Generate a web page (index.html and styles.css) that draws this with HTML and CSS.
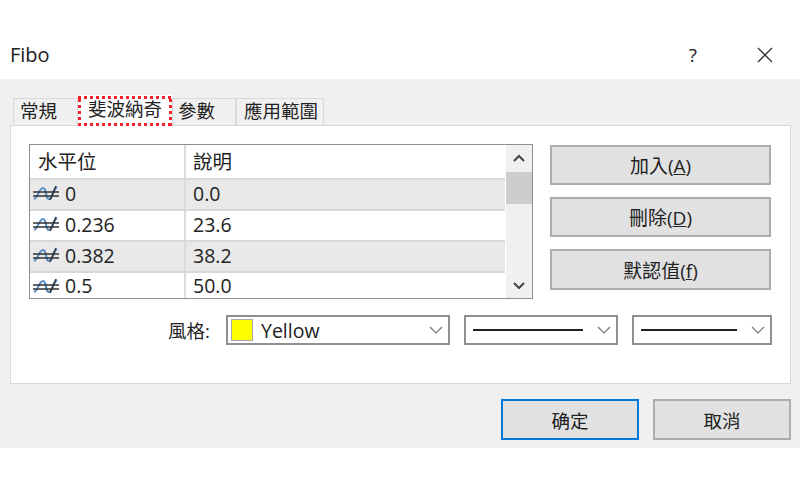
FILE: index.html
```html
<!DOCTYPE html>
<html lang="zh-Hant">
<head>
    <meta charset="UTF-8">
    <title>Fibo</title>
    <link rel="stylesheet" href="styles.css">
</head>
<body>
    <!-- Icon used in every level row -->
    <svg class="sprite" width="0" height="0">
        <symbol id="level" viewBox="0 0 26 17">
            <path d="M1 14C5 13 6 3 10 3C14 3 12 14 16 14C20 14 19 5 24 2" fill="none" stroke="#5b8fc7" stroke-width="2.200"/>
            <path d="M0 7H26M0 11H26" stroke="#333" stroke-width="1.600"/>
            <path d="M17 15L23 1" stroke="#333" stroke-width="1.400"/>
        </symbol>
    </svg>

    <div class="title-bar">
        <span class="title">Fibo</span>
        <span class="help">?</span>
        <svg class="close" width="16" height="16" viewBox="0 0 16 16">
            <path d="M1 1L15 15M15 1L1 15" stroke="#333" stroke-width="1.300"/>
        </svg>
    </div>

    <div class="dialog">
        <div class="tabs">
            <div class="tab tab-first">常規</div>
            <div class="tab tab-active"><span class="focus">斐波納奇</span></div>
            <div class="tab tab-third">參數</div>
            <div class="tab tab-last">應用範圍</div>
        </div>

        <div class="panel">
            <div class="top-row">
                <div class="list">
                    <div class="list-rows">
                        <div class="row row-head">
                            <div class="cell cell-level">水平位</div>
                            <div class="cell">說明</div>
                        </div>
                        <div class="row row-grey">
                            <div class="cell cell-level"><svg class="level-icon"><use href="#level"/></svg>0</div>
                            <div class="cell">0.0</div>
                        </div>
                        <div class="row">
                            <div class="cell cell-level"><svg class="level-icon"><use href="#level"/></svg>0.236</div>
                            <div class="cell">23.6</div>
                        </div>
                        <div class="row row-grey">
                            <div class="cell cell-level"><svg class="level-icon"><use href="#level"/></svg>0.382</div>
                            <div class="cell">38.2</div>
                        </div>
                        <div class="row row-last">
                            <div class="cell cell-level"><svg class="level-icon"><use href="#level"/></svg>0.5</div>
                            <div class="cell">50.0</div>
                        </div>
                    </div>
                    <div class="scrollbar">
                        <svg class="arrow" width="14" height="9" viewBox="0 0 14 9"><path d="M2 7L7 2L12 7" fill="none" stroke="#444" stroke-width="2"/></svg>
                        <div class="thumb"></div>
                        <svg class="arrow arrow-down" width="14" height="9" viewBox="0 0 14 9"><path d="M2 2L7 7L12 2" fill="none" stroke="#444" stroke-width="2"/></svg>
                    </div>
                </div>

                <div class="side-buttons">
                    <button class="btn">加入(<u>A</u>)</button>
                    <button class="btn">刪除(<u>D</u>)</button>
                    <button class="btn btn-tall">默認值(<u>f</u>)</button>
                </div>
            </div>

            <div class="style-row">
                <span class="style-label">風格:</span>
                <div class="combo combo-color">
                    <span class="swatch"></span>
                    <span class="combo-text">Yellow</span>
                    <svg class="chevron" width="14" height="8" viewBox="0 0 14 8"><path d="M1 1L7 7L13 1" fill="none" stroke="#777" stroke-width="1.200"/></svg>
                </div>
                <div class="combo combo-width">
                    <span class="line"></span>
                    <svg class="chevron" width="14" height="8" viewBox="0 0 14 8"><path d="M1 1L7 7L13 1" fill="none" stroke="#777" stroke-width="1.200"/></svg>
                </div>
                <div class="combo combo-dash">
                    <span class="line"></span>
                    <svg class="chevron" width="14" height="8" viewBox="0 0 14 8"><path d="M1 1L7 7L13 1" fill="none" stroke="#777" stroke-width="1.200"/></svg>
                </div>
            </div>
        </div>

        <div class="footer">
            <button class="btn btn-footer btn-default">确定</button>
            <button class="btn btn-footer">取消</button>
        </div>
    </div>
</body>
</html>
```

FILE: styles.css
```css
/* Page */
body {
    margin: 0;
    width: 800px;
    height: 500px;
    overflow: hidden;
    background-color: #fff;
    color: #222;
    font-family: "Open Sans", "Noto Sans CJK TC", sans-serif;
    font-size: 19.5px;
}

.sprite {
    display: block;
}

/* Title bar */
.title-bar {
    display: flex;
    align-items: center;
    height: 79px;
    padding: 30px 27px 0 10px;
    box-sizing: border-box;
}

.title {
    flex: 1;
    font-size: 20px;
}

.help {
    margin-right: 60px;
    font-size: 19px;
}

/* Dialog body */
.dialog {
    height: 369px;
    padding: 15px 9px 0 10px;
    box-sizing: border-box;
    background-color: #f0f0f0;
}

/* Tabs */
.tabs {
    display: flex;
    align-items: flex-end;
    height: 31px;
    padding-left: 3px;
    font-size: 18.500px;
}

.tab {
    display: flex;
    align-items: center;
    height: 27px;
    padding-bottom: 5px;
    box-sizing: border-box;
    background-color: #f0f0f0;
    border: 1px solid #d9d9d9;
    border-bottom: none;
}

.tab-first {
    width: 65px;
    padding-left: 6px;
}

.tab-active {
    position: relative;
    width: 94px;
    height: 31px;
    padding-bottom: 0;
    background-color: #fff;
    border: none;
    margin-bottom: -1px;
    z-index: 1;
}

/* Square red dots of the focus box */
.focus {
    display: flex;
    align-items: center;
    justify-content: center;
    width: 94px;
    height: 30px;
    padding-bottom: 5px;
    box-sizing: border-box;
    background:
        repeating-linear-gradient(90deg, #f5202c 0 3px, transparent 3px 6px) top / 100% 3px no-repeat,
        repeating-linear-gradient(90deg, #f5202c 0 3px, transparent 3px 6px) bottom / 100% 3px no-repeat,
        repeating-linear-gradient(0deg, #f5202c 0 3px, transparent 3px 6px) left / 3px 100% no-repeat,
        repeating-linear-gradient(0deg, #f5202c 0 3px, transparent 3px 6px) right / 3px 100% no-repeat;
}

.tab-third {
    width: 64px;
    padding-left: 5px;
}

.tab-last {
    width: 88px;
    padding-left: 7px;
}

.panel {
    height: 259px;
    padding: 18px 12px 0 18px;
    box-sizing: border-box;
    background-color: #fff;
    border: 1px solid #d9d9d9;
}

.top-row {
    display: flex;
    gap: 17px;
}

/* Level list */
.list {
    display: flex;
    width: 504px;
    height: 155px;
    box-sizing: border-box;
    border: 1px solid #8f8f8f;
}

.list-rows {
    flex: 1;
}

.row {
    display: flex;
    align-items: center;
    height: 31px;
    box-sizing: border-box;
    border-bottom: 2px solid #d8d8d8;
}

.row-head {
    height: 35px;
}

.row-grey {
    background-color: #e9e9e9;
}

.row-last {
    height: 25px;
    border-bottom: none;
}

.cell {
    display: flex;
    align-items: center;
    height: 100%;
    padding-left: 7px;
    padding-bottom: 2px;
    box-sizing: border-box;
    line-height: 22px;
}

.row-head .cell {
    padding-bottom: 0;
}

.row-last .cell {
    padding-top: 1px;
    padding-bottom: 0;
}

.cell-level {
    width: 156px;
    padding-left: 8px;
    border-right: 2px solid #dcdcdc;
}

.level-icon {
    width: 26px;
    height: 17px;
    margin: 0 6px 0 -5px;
}

.scrollbar {
    display: flex;
    flex-direction: column;
    align-items: center;
    width: 26px;
    background-color: #f0f0f0;
    border-left: 1px solid #fff;
}

.arrow {
    margin-top: 9px;
    margin-bottom: 9px;
}

.thumb {
    width: 100%;
    height: 32px;
    background-color: #cdcdcd;
}

.arrow-down {
    margin-top: auto;
    margin-bottom: 8px;
}

/* Buttons */
.side-buttons {
    display: flex;
    flex-direction: column;
    gap: 12px;
    padding-top: 1px;
}

.btn {
    width: 221px;
    height: 40px;
    padding: 0;
    background-color: #e1e1e1;
    border: 2px solid #adadad;
    color: #222;
    font-family: inherit;
    font-size: 19px;
}

.btn-tall {
    height: 41px;
}

/* Style row */
.style-row {
    display: flex;
    align-items: center;
    gap: 14px;
    margin-top: 16px;
    padding-left: 139px;
}

.style-label {
    width: 44px;
    font-size: 18.500px;
}

.combo {
    display: flex;
    align-items: center;
    height: 30px;
    box-sizing: border-box;
    background-color: #fff;
    border: 2px solid #8f8f8f;
}

.combo-color {
    width: 224px;
}

.combo-width {
    width: 154px;
}

.combo-dash {
    width: 140px;
}

.swatch {
    width: 20px;
    height: 20px;
    margin-left: 3px;
    background-color: #ff0;
    border: 1px solid #a8a8a8;
}

.combo-text {
    margin-left: 8px;
}

.line {
    flex: 1;
    height: 2px;
    margin: 0 14px 0 7px;
    background-color: #222;
}

.chevron {
    flex: none;
    margin-right: 5px;
}

.combo-color .chevron {
    margin-left: auto;
}

/* Footer */
.footer {
    display: flex;
    justify-content: flex-end;
    gap: 14px;
    margin-top: 15px;
}

.btn-footer {
    width: 138px;
    height: 41px;
    font-size: 18.500px;
}

.btn-default {
    border-color: #0078d7;
}
```
